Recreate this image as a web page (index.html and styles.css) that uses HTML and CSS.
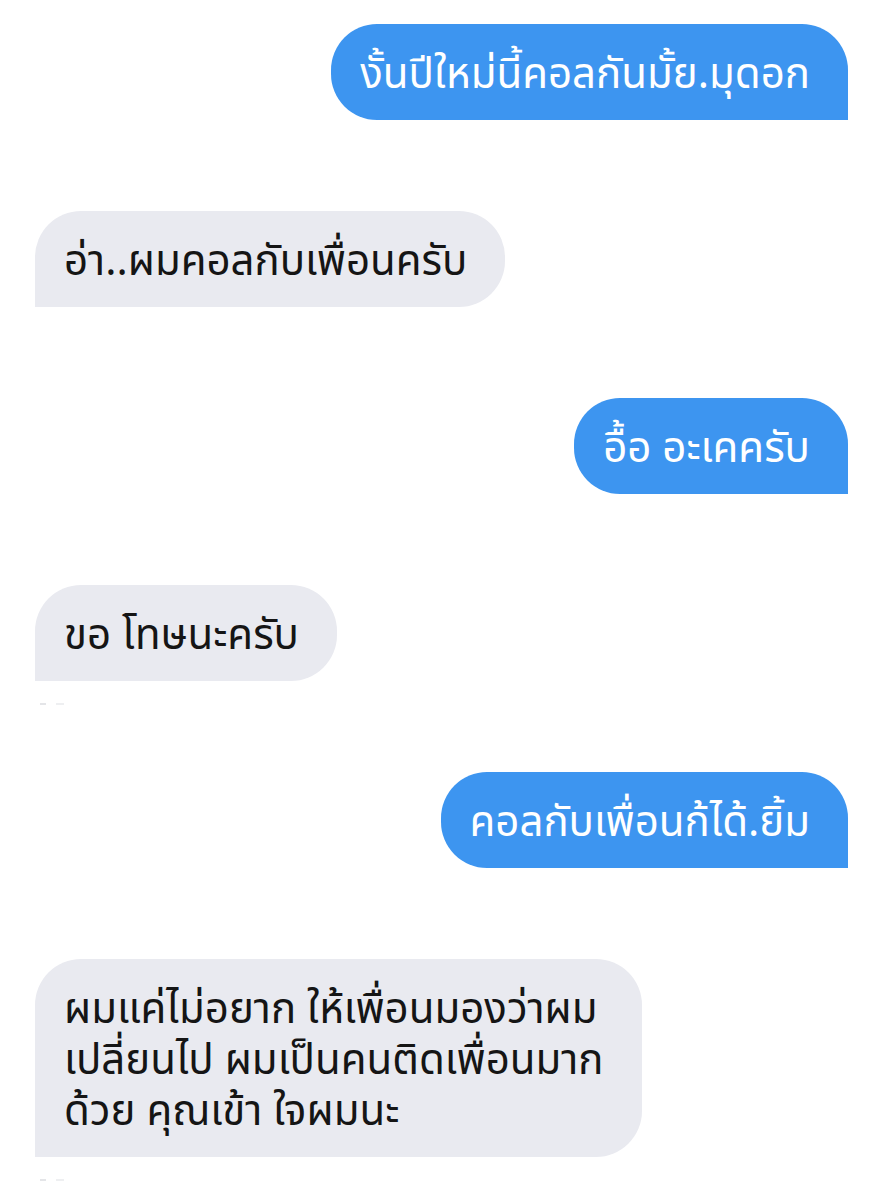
FILE: index.html
```html
<html>
<head>
  <meta charset="utf-8">
  <title>แชท</title>
  <link rel="stylesheet" href="styles.css">
</head>
<body>
  <div class="chat">
    <div class="msg sent">งั้นปีใหม่นี้คอลกันมั้ย.มุดอก</div>
    <div class="msg recv">อ่า..ผมคอลกับเพื่อนครับ</div>
    <div class="msg sent">อื้อ อะเคครับ</div>
    <div class="msg recv seen">ขอ โทษนะครับ</div>
    <div class="msg sent">คอลกับเพื่อนก้ได้.ยิ้ม</div>
    <div class="msg recv seen">ผมแค่ไม่อยาก ให้เพื่อนมองว่าผม<br>เปลี่ยนไป ผมเป็นคนติดเพื่อนมาก<br>ด้วย คุณเข้า ใจผมนะ</div>
  </div>
</body>
</html>
```

FILE: styles.css
```css
body {
  background-color: #fff;
  margin: 0;
  padding: 0;
  font-family: "Noto Sans", "Noto Sans Thai", "DejaVu Sans", sans-serif;
}

.chat {
  display: flex;
  flex-direction: column;
  gap: 91px;
  padding: 24px 43px 0 35px;
}

.msg {
  position: relative;
  font-size: 42px;
  line-height: 51px;
  padding: 22px 38px 23px 29px;
  border-radius: 46px;
  white-space: nowrap;
}

.sent {
  align-self: flex-end;
  background-color: #3d95f0;
  color: #fff;
  border-bottom-right-radius: 0;
}

.recv {
  align-self: flex-start;
  background-color: #e9eaf0;
  color: #151515;
  border-bottom-left-radius: 0;
}

/* cut-off status text under the bubble */
.seen::after {
  content: "";
  position: absolute;
  left: 5px;
  bottom: -24px;
  width: 24px;
  height: 2px;
  border-left: 6px solid #e4e5e8;
  border-right: 8px solid #eeeff1;
  box-sizing: border-box;
}
```
